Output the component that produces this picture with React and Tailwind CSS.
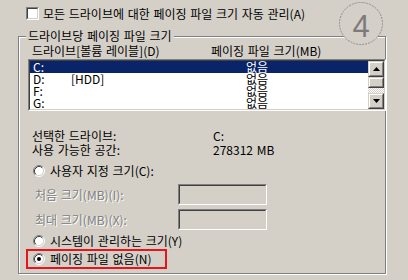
import React from "react";

function Radio({ checked }) {
  return (
    <svg width="12" height="12" viewBox="0 0 12 12" className="shrink-0">
      <circle cx="6" cy="6" r="4.5" fill="#fff" />
      <path d="M2.11 9.89 A5.5 5.5 0 0 1 9.89 2.11" fill="none" stroke="#808080" strokeWidth="1" />
      <path d="M9.89 2.11 A5.5 5.5 0 0 1 2.11 9.89" fill="none" stroke="#ffffff" strokeWidth="1" />
      <path d="M2.82 9.18 A4.5 4.5 0 0 1 9.18 2.82" fill="none" stroke="#404040" strokeWidth="1" />
      <path d="M9.18 2.82 A4.5 4.5 0 0 1 2.82 9.18" fill="none" stroke="#d4d0c8" strokeWidth="1" />
      {checked && <circle cx="6" cy="6" r="2" fill="#000" />}
    </svg>
  );
}

function Sunken({ className, innerClassName, children }) {
  return (
    <div className={"border border-t-[#808080] border-l-[#808080] border-b-white border-r-white " + className}>
      <div className={"w-full h-full border border-t-[#404040] border-l-[#404040] border-b-[#d4d0c8] border-r-[#d4d0c8] " + innerClassName}>
        {children}
      </div>
    </div>
  );
}

function Raised({ className, children }) {
  return (
    <div className={"border border-t-[#d4d0c8] border-l-[#d4d0c8] border-b-[#404040] border-r-[#404040] bg-[#d4d0c8] " + className}>
      <div className="w-full h-full border border-t-white border-l-white border-b-[#808080] border-r-[#808080] flex items-center justify-center">
        {children}
      </div>
    </div>
  );
}

const rows = [
  { d: "C:", l: "", sel: true },
  { d: "D:", l: "[HDD]" },
  { d: "F:", l: "" },
  { d: "G:", l: "" },
];

export default function App() {
  return (
    <div
      className="w-[408px] h-[280px] bg-[#d4d0c8] relative overflow-hidden text-[12px] leading-[14px] text-black [word-spacing:1px]"
      style={{ fontFamily: '"Noto Sans CJK KR", "Noto Sans", sans-serif' }}
    >
      {/* top checkbox */}
      <div className="h-[36px] flex items-start pt-[7px] pl-[26px]">
        <Sunken className="w-[13px] h-[13px]" innerClassName="bg-white" />
        <span className="ml-[4px] leading-[13px]">모든 드라이브에 대한 페이징 파일 크기 자동 관리(A)</span>
      </div>

      {/* group box */}
      <div className="ml-[18px] w-[368px] h-[238px] border border-[#808080] shadow-[1px_1px_0_#fff,inset_1px_1px_0_#fff] relative">
        <span className="absolute left-[7px] top-[-8px] px-[2px] bg-[#d4d0c8]">드라이브당 페이징 파일 크기</span>

        <div className="mt-[7px] pl-[13px] flex">
          <span className="w-[179px]">드라이브[볼륨 레이블](D)</span>
          <span>페이징 파일 크기(MB)</span>
        </div>

        {/* list */}
        <Sunken className="mt-[1px] ml-[9px] w-[358px] h-[52px] relative z-10" innerClassName="bg-white flex overflow-hidden">
          <div className="flex-1 flex flex-col">
            {rows.map((r) => (
              <div
                key={r.d}
                className={"h-[12px] leading-[12px] flex " + (r.sel ? "bg-[#0a246a] text-white" : "")}
              >
                <span className="w-[41px] pl-[3px]">{r.d}</span>
                <span className="w-[175px]">{r.l}</span>
                <span>없음</span>
              </div>
            ))}
          </div>
          <div className="w-[16px] flex flex-col">
            <Raised className="w-[16px] h-[16px]">
              <svg width="7" height="4" viewBox="0 0 7 4"><path d="M3.5 0 L7 4 L0 4 Z" fill="#000" /></svg>
            </Raised>
            <Raised className="w-[16px] h-[11px]" />
            <div className="h-[5px] bg-[image:repeating-conic-gradient(#fff_0_25%,#d4d0c8_0_50%)] bg-[length:2px_2px]" />
            <Raised className="w-[16px] h-[16px]">
              <svg width="7" height="4" viewBox="0 0 7 4"><path d="M0 0 L7 0 L3.5 4 Z" fill="#000" /></svg>
            </Raised>
          </div>
        </Sunken>

        {/* info */}
        <div className="mt-[18px] pl-[13px] flex">
          <span className="w-[181px]">선택한 드라이브:</span>
          <span>C:</span>
        </div>
        <div className="pl-[13px] flex">
          <span className="w-[181px]">사용 가능한 공간:</span>
          <span>278312 MB</span>
        </div>

        <div className="mt-[7px] pl-[14px] flex items-center h-[14px]">
          <Radio />
          <span className="ml-[5px]">사용자 지정 크기(C):</span>
        </div>

        <div className="mt-[6px] pl-[16px] flex items-center h-[21px]">
          <span className="w-[143px] text-[#808080] [text-shadow:1px_1px_0_#fff]">처음 크기(MB)(I):</span>
          <Sunken className="w-[89px] h-[21px]" innerClassName="bg-[#d4d0c8]" />
        </div>
        <div className="mt-[4px] pl-[16px] flex items-center h-[21px]">
          <span className="w-[143px] text-[#808080] [text-shadow:1px_1px_0_#fff]">최대 크기(MB)(X):</span>
          <Sunken className="w-[89px] h-[21px]" innerClassName="bg-[#d4d0c8]" />
        </div>

        <div className="mt-[4px] pl-[14px] flex items-center h-[14px]">
          <Radio />
          <span className="ml-[5px]">시스템이 관리하는 크기(Y)</span>
        </div>

        <div className="mt-[1px] ml-[7px] w-[141px] h-[20px] border-2 border-[#e8141c] pl-[5px] flex items-center">
          <Radio checked />
          <span className="ml-[5px]">페이징 파일 없음(N)</span>
        </div>
      </div>

      {/* annotation circle */}
      <div className="absolute left-[339px] top-[2px] w-[44px] h-[43px] z-20">
        <svg width="44" height="43" viewBox="0 0 44 43" className="absolute inset-0">
          <ellipse cx="22" cy="21.5" rx="21.5" ry="21" fill="#d4d0c8" stroke="#8e8e8e" strokeWidth="1" strokeDasharray="2 1" />
        </svg>
        <div
          className="absolute inset-0 flex items-center justify-center pt-[5px] text-[31px] leading-[31px] text-[#7c7c7c] [word-spacing:0]"
          style={{ fontFamily: '"Liberation Sans", Arial, sans-serif' }}
        >
          4
        </div>
      </div>
    </div>
  );
}
